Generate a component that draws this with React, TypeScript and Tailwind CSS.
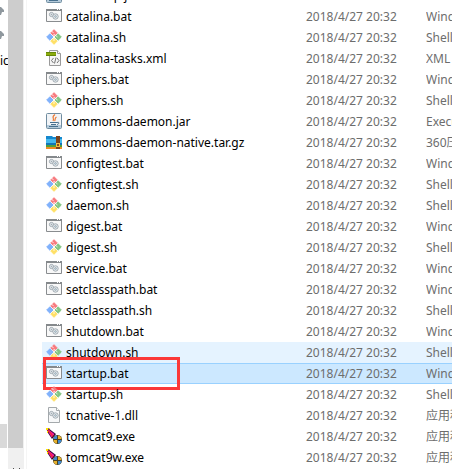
import { ReactNode } from 'react';

type Kind = 'bat' | 'sh' | 'xml' | 'jar' | 'gz' | 'dll' | 'exe';

interface FileRow {
  name: string;
  kind: Kind;
  type: string;
}

const files: FileRow[] = [
  { name: 'bootstrap.jar', kind: 'jar', type: 'Executable Jar File' },
  { name: 'catalina.bat', kind: 'bat', type: 'Windows 批处理文件' },
  { name: 'catalina.sh', kind: 'sh', type: 'Shell Script' },
  { name: 'catalina-tasks.xml', kind: 'xml', type: 'XML 文档' },
  { name: 'ciphers.bat', kind: 'bat', type: 'Windows 批处理文件' },
  { name: 'ciphers.sh', kind: 'sh', type: 'Shell Script' },
  { name: 'commons-daemon.jar', kind: 'jar', type: 'Executable Jar File' },
  { name: 'commons-daemon-native.tar.gz', kind: 'gz', type: '360压缩' },
  { name: 'configtest.bat', kind: 'bat', type: 'Windows 批处理文件' },
  { name: 'configtest.sh', kind: 'sh', type: 'Shell Script' },
  { name: 'daemon.sh', kind: 'sh', type: 'Shell Script' },
  { name: 'digest.bat', kind: 'bat', type: 'Windows 批处理文件' },
  { name: 'digest.sh', kind: 'sh', type: 'Shell Script' },
  { name: 'service.bat', kind: 'bat', type: 'Windows 批处理文件' },
  { name: 'setclasspath.bat', kind: 'bat', type: 'Windows 批处理文件' },
  { name: 'setclasspath.sh', kind: 'sh', type: 'Shell Script' },
  { name: 'shutdown.bat', kind: 'bat', type: 'Windows 批处理文件' },
  { name: 'shutdown.sh', kind: 'sh', type: 'Shell Script' },
  { name: 'startup.bat', kind: 'bat', type: 'Windows 批处理文件' },
  { name: 'startup.sh', kind: 'sh', type: 'Shell Script' },
  { name: 'tcnative-1.dll', kind: 'dll', type: '应用程序扩展' },
  { name: 'tomcat9.exe', kind: 'exe', type: '应用程序' },
  { name: 'tomcat9w.exe', kind: 'exe', type: '应用程序' },
];

const gears = (
  <g fill="#e9eef1" stroke="#98a3aa" strokeWidth=".9">
    <circle cx="5.500" cy="6.500" r="2.100" />
    <circle cx="9.500" cy="8.500" r="2.700" />
    <circle cx="5.500" cy="6.500" r=".4" fill="#8fa0aa" />
    <circle cx="9.500" cy="8.500" r=".9" fill="#c5e2f2" />
  </g>
);

const icons: Record<Kind, ReactNode> = {
  bat: (
    <>
      <path d="M.5 1.500h15v12H.5z" fill="#f8f8f8" stroke="#898c8f" />
      <path d="M0 1h16v2H0z" fill="#85898c" />
      <path d="M11 1h1v1h-1zM13 1h1v1h-1z" fill="#fff" />
      {gears}
    </>
  ),
  sh: (
    <>
      <g strokeWidth="1" strokeLinejoin="round">
        <path d="M8 .7l3.200 3.200L8 7.100 4.800 3.900z" fill="#f7797d" stroke="#f7797d" />
        <path d="M3.900 4.800L7 8l-3.100 3.200L.7 8z" fill="#80b1fb" stroke="#80b1fb" />
        <path d="M12.100 4.800L15.300 8l-3.200 3.200L9 8z" fill="#83c583" stroke="#83c583" />
        <path d="M8 8.900l3.200 3.200L8 15.300l-3.200-3.200z" fill="#ffe066" stroke="#ffe066" />
      </g>
      <path d="M5.500 2l2.200 2.200M8 5v7M8.500 5.500L11.500 8" fill="none" stroke="#fff" strokeWidth=".8" />
    </>
  ),
  xml: (
    <>
      <path d="M3.500.5h8l3 3v12h-11z" fill="#f5f5f5" stroke="#9a9a9a" />
      <path d="M11.500.5v3h3" fill="#fff" stroke="#9a9a9a" />
      <path d="M0 2h10v4H0z" fill="#8bab0c" />
      <path d="M0 2h10v1H0zM0 5h10v1H0z" fill="#648708" />
      <path d="M7.500 8L5.500 10.500l2 2.500M11 8l2 2.500-2 2.500M10 7.500l-1.500 6" fill="none" stroke="#737373" />
    </>
  ),
  jar: (
    <>
      <rect x=".5" y=".5" width="15" height="15" rx="1" fill="#f1f4f7" stroke="#6f8ca0" />
      <path d="M1 12h14v3H1z" fill="#b4cada" />
      <path d="M9 1.500C4.500 4.500 9 5 7 8M10.500 4C8 5.500 10 6.500 8.500 8" fill="none" stroke="#ec7a35" strokeWidth="1.200" />
      <path d="M4 9.500h7M5 11.500h5M3 13.500h9M11 9.500c3-1 2 2 0 2" fill="none" stroke="#47708e" />
    </>
  ),
  gz: (
    <>
      <path d="M0 2h6l1 1h9v8H0z" fill="#1688cd" />
      <path d="M0 5h16v5H0z" fill="#43b9ef" />
      <path d="M0 9h16v2H0z" fill="#1376b8" />
      <path d="M0 11h16v2H0z" fill="#4f9e3d" />
      <path d="M0 13h16v2H0z" fill="#ef8c24" />
      <path d="M10 2h4v13h-4z" fill="#7b431d" />
      <path d="M10 9h4v4h-4z" fill="#f7bd45" />
      <path d="M11 10h2v2h-2z" fill="#8a4c19" />
    </>
  ),
  dll: (
    <>
      <path d="M2.500.5h8l3 3v12h-11z" fill="#f7f8f9" stroke="#a4a9ac" />
      <path d="M10.500.5v3h3" fill="#fff" stroke="#a4a9ac" />
      {gears}
    </>
  ),
  exe: (
    <>
      <path d="M0 0h2l8 6-4 5-4-6z" fill="#3a0d3c" />
      <path d="M1 .500l8 6-3 3.500-3-5z" fill="#f414a8" />
      <path d="M2 2l5.500 7" stroke="#f02a3c" strokeWidth="1.400" />
      <path d="M9 6L6 10" stroke="#201020" strokeWidth="1" />
      <path d="M0 0h2v2H0zM1 3h1v2H1zM3 0h1v1H3z" fill="#ffe600" />
      <circle cx="11.500" cy="11.500" r="4.500" fill="#4a4224" />
      <path d="M11 7.500V11H7.500c0-2 1.500-3.500 3.500-3.500zM12 12h3.500c0 2-1.500 3.500-3.500 3.500z" fill="#3f8ad0" />
      <path d="M12 7.500V11h3.500c0-2-1.500-3.500-3.500-3.500zM7.500 12H11v3.500c-2 0-3.500-1.500-3.500-3.500z" fill="#e5b02c" />
    </>
  ),
};

function FileIcon({ kind }: { kind: Kind }) {
  return (
    <svg className="mb-px h-4 w-4 shrink-0" viewBox="0 0 16 16" aria-hidden="true">
      {icons[kind]}
    </svg>
  );
}

function Pin() {
  return (
    <svg className="h-3 w-1 shrink-0" viewBox="0 0 4 12" aria-hidden="true">
      <path d="M0 1h1l3 3v2H2L1 9H0z" fill="#8f989e" />
    </svg>
  );
}

function rowColor(name: string) {
  if (name === 'startup.bat') return 'bg-[#cce8ff] shadow-[inset_0_1px_#99d1ff,inset_0_-1px_#99d1ff]';
  if (name === 'shutdown.sh') return 'bg-[#e5f3ff]';
  return 'bg-white';
}

export default function App() {
  return (
    <div className="flex h-screen overflow-hidden bg-white font-['Noto_Sans','Noto_Sans_CJK_SC',sans-serif] text-[12px] leading-[21px] text-black">
      <nav className="flex w-2 shrink-0 flex-col overflow-hidden pt-1.5">
        <Pin />
        <div className="h-3 shrink-0" />
        <Pin />
        <span className="mt-2">ic</span>
        <div className="mt-auto mb-[21px] h-6 w-[7px] shrink-0 bg-[#d9d9d9]" />
      </nav>
      <div className="flex w-4 shrink-0 flex-col bg-[#f0f0f0]">
        <div className="mr-px flex-1 bg-[#cdcdcd]" />
        <div className="flex h-[21px] items-end justify-center gap-[5px]">
          <span className="h-px w-px bg-[#505050]" />
          <span className="h-px w-px bg-[#505050]" />
        </div>
      </div>
      <main className="ml-0.5 min-w-0 flex-1 overflow-hidden border-l border-[#f5f5f5] pl-[15px]">
        {/* list is scrolled, so the first row shows only its lower edge */}
        <table className="-mt-[15px] w-full table-fixed border-collapse">
          <tbody>
            {files.map(file => (
              <tr key={file.name} className={`h-[21px] ${rowColor(file.name)}`}>
                <td className="p-0 pl-1">
                  <div className="relative flex items-center gap-1">
                    <FileIcon kind={file.kind} />
                    <span className="whitespace-nowrap">{file.name}</span>
                    {file.name === 'startup.bat' && (
                      <div className="absolute -top-1.5 -left-[3px] h-[33px] w-[137px] border-3 border-[#fb3838]" />
                    )}
                  </div>
                </td>
                <td className="w-[120px] p-0 whitespace-nowrap text-[#6d6d6d]">2018/4/27 20:32</td>
                <td className="w-[26px] overflow-hidden p-0 whitespace-nowrap text-[#6d6d6d]">{file.type}</td>
              </tr>
            ))}
          </tbody>
        </table>
      </main>
    </div>
  );
}
